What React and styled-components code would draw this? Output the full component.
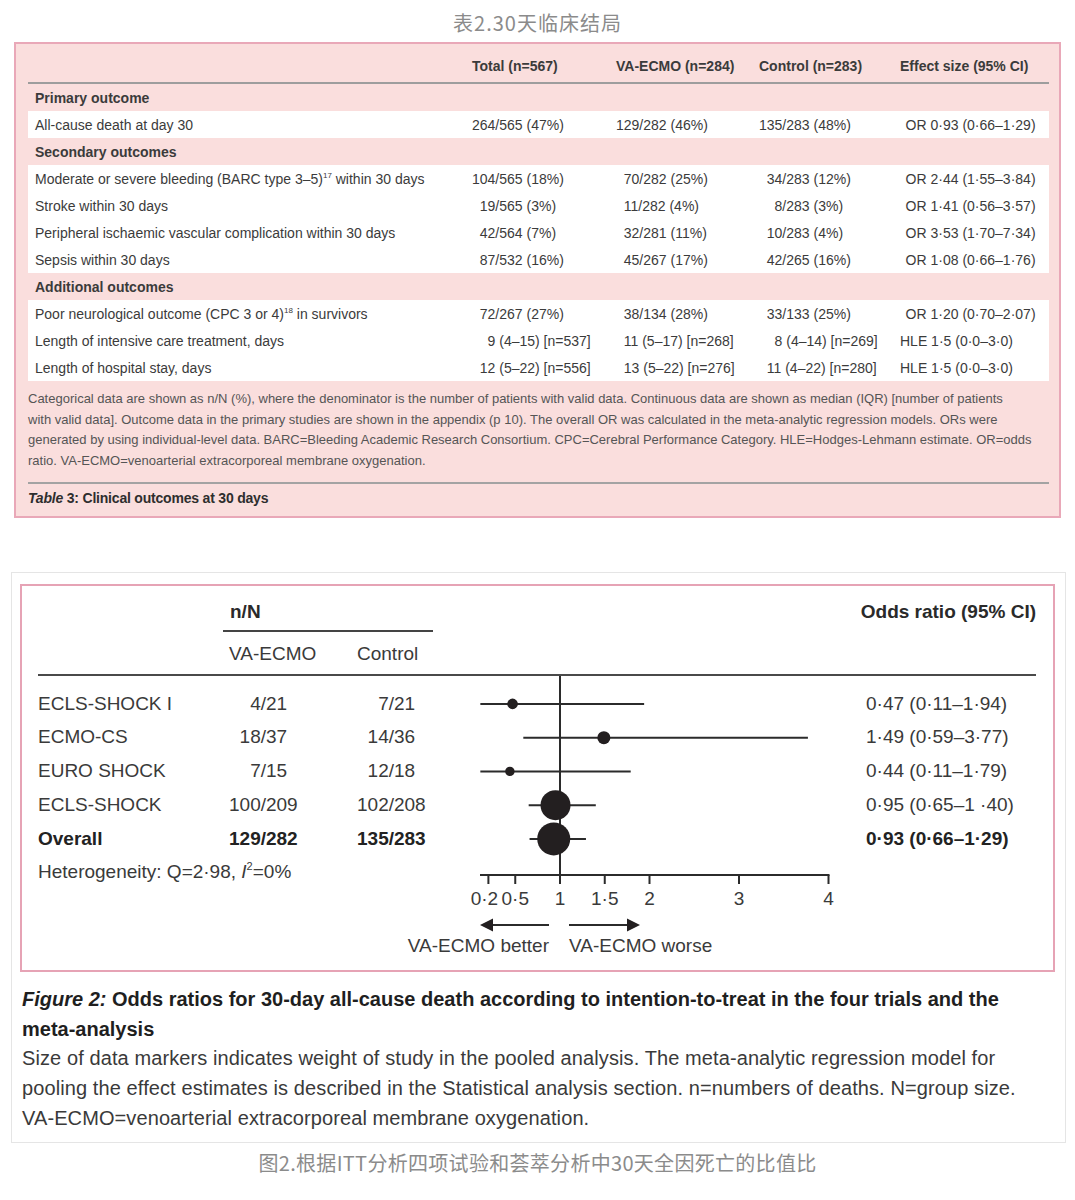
import React from "react";
import styled, { createGlobalStyle } from "styled-components";

const GlobalStyle = createGlobalStyle`
  body {
    margin: 0;
    background: #fff;
    font-family: "Liberation Sans", Arial, sans-serif;
  }
`;

// figure space / thin spaces keep the numbers lined up on the slash
const F = "\u2007";
const T = "\u2009\u2009";

const tableSections = [
  {
    title: "Primary outcome",
    rows: [
      ["All-cause death at day 30", "264/565 (47%)", "129/282 (46%)", "135/283 (48%)", T + "OR 0·93 (0·66–1·29)"],
    ],
  },
  {
    title: "Secondary outcomes",
    rows: [
      [
        <>Moderate or severe bleeding (BARC type 3–5)<sup>17</sup> within 30 days</>,
        "104/565 (18%)", F + "70/282 (25%)", F + "34/283 (12%)", T + "OR 2·44 (1·55–3·84)",
      ],
      ["Stroke within 30 days", F + "19/565 (3%)", F + "11/282 (4%)", F + F + "8/283 (3%)", T + "OR 1·41 (0·56–3·57)"],
      ["Peripheral ischaemic vascular complication within 30 days", F + "42/564 (7%)", F + "32/281 (11%)", F + "10/283 (4%)", T + "OR 3·53 (1·70–7·34)"],
      ["Sepsis within 30 days", F + "87/532 (16%)", F + "45/267 (17%)", F + "42/265 (16%)", T + "OR 1·08 (0·66–1·76)"],
    ],
  },
  {
    title: "Additional outcomes",
    rows: [
      [
        <>Poor neurological outcome (CPC 3 or 4)<sup>18</sup> in survivors</>,
        F + "72/267 (27%)", F + "38/134 (28%)", F + "33/133 (25%)", T + "OR 1·20 (0·70–2·07)",
      ],
      ["Length of intensive care treatment, days", F + F + "9 (4–15) [n=537]", F + "11 (5–17) [n=268]", F + F + "8 (4–14) [n=269]", "HLE 1·5 (0·0–3·0)"],
      ["Length of hospital stay, days", F + "12 (5–22) [n=556]", F + "13 (5–22) [n=276]", F + "11 (4–22) [n=280]", "HLE 1·5 (0·0–3·0)"],
    ],
  },
];

const studies = [
  { name: "ECLS-SHOCK I", va: F + F + "4/21", ctrl: F + F + "7/21", or: "0·47 (0·11–1·94)", est: 0.47, lo: 0.11, hi: 1.94, r: 5.3 },
  { name: "ECMO-CS", va: F + "18/37", ctrl: F + "14/36", or: "1·49 (0·59–3·77)", est: 1.49, lo: 0.59, hi: 3.77, r: 6.5 },
  { name: "EURO SHOCK", va: F + F + "7/15", ctrl: F + "12/18", or: "0·44 (0·11–1·79)", est: 0.44, lo: 0.11, hi: 1.79, r: 4.7 },
  { name: "ECLS-SHOCK", va: "100/209", ctrl: "102/208", or: "0·95 (0·65–1 ·40)", est: 0.95, lo: 0.65, hi: 1.4, r: 15 },
  { name: "Overall", va: "129/282", ctrl: "135/283", or: "0·93 (0·66–1·29)", est: 0.93, lo: 0.66, hi: 1.29, r: 16.5, bold: true },
];

// value, label, nudge of the label so the two small ticks don't collide
const ticks = [
  [0.2, "0·2", -4], [0.5, "0·5", 0], [1, "1", 0], [1.5, "1·5", 0], [2, "2", 0], [3, "3", 0], [4, "4", 0],
];

const ROW_H = 33.75;
const BODY_TOP = 11;
const sx = (v) => 34.5 + 89.5 * v;
const cy = (i) => BODY_TOP + ROW_H * i + ROW_H / 2;

/* ---------- table ---------- */

const Page = styled.div`
  width: 1075px;
  padding-bottom: 20px;
`;

const CnCaption = styled.div`
  box-sizing: border-box;
  height: ${(p) => p.$height}px;
  padding-top: ${(p) => p.$top}px;
  line-height: 26px;
  text-align: center;
  font-family: "Noto Sans CJK SC", "Noto Sans", sans-serif;
  font-size: 20px;
  letter-spacing: ${(p) => p.$spacing}px;
  color: #8b8b8b;
`;

const TableBox = styled.section`
  margin: 0 14px;
  border: 2px solid #e9a8b8;
  background: #fadedd;
  padding: 0 10px 8px 12px;
  color: #3b3b3b;
  font-size: 14px;
`;

const Row = styled.div`
  display: grid;
  grid-template-columns: 444px 144px 143px 141px 1fr;
  align-items: center;
  height: 27px;
  white-space: nowrap;
  background: ${(p) => (p.$white ? "#fff" : "transparent")};

  sup {
    font-size: 8px;
    line-height: 0;
    vertical-align: 6px;
  }
`;

const HeadRow = styled(Row)`
  box-sizing: border-box;
  height: 40px;
  align-items: start;
  padding-top: 12px;
  line-height: 20px;
  font-weight: 700;
  border-bottom: 2px solid #9d9d9d;
`;

const Label = styled.div`
  padding-left: 7px;
  font-weight: ${(p) => (p.$bold ? 700 : 400)};
`;

const Cell = styled.div``;

const Footnote = styled.p`
  margin: 0;
  padding-top: 8px;
  font-size: 13px;
  line-height: 20.7px;
  color: #555;
  white-space: nowrap;
`;

const FootRule = styled.hr`
  margin: 10px 0 0;
  border: 0;
  border-top: 2px solid #a3a3a3;
`;

const TableTitle = styled.div`
  margin-top: 4px;
  line-height: 20px;
  font-weight: 700;
  letter-spacing: -0.2px;
  color: #2e2e2e;
`;

/* ---------- forest plot ---------- */

const FigureBox = styled.section`
  margin: 54px 9px 0 11px;
  border: 1px solid #e5e5e5;
  padding: 11px 10px 8px 8px;
`;

const ForestPanel = styled.div`
  border: 2px solid #e6a3b5;
  padding: 0 17px 0 16px;
  color: #3a3a3a;
  font-size: 19px;
`;

const ForestHead = styled.div`
  display: grid;
  grid-template-columns: 191px 128px 76px 1fr;
  border-bottom: 2px solid #4a4a4a;
  line-height: 24px;
`;

const NGroup = styled.div`
  grid-column: 2 / 4;
  grid-row: 1;
  margin-left: -6px;
  padding: 14px 0 6px 7px;
  border-bottom: 2px solid #444;
  font-weight: 700;
  color: #2a2a2a;
`;

const OddsHead = styled.div`
  grid-column: 4;
  grid-row: 1;
  justify-self: end;
  padding-top: 14px;
  font-weight: 700;
  color: #2a2a2a;
`;

const SubHead = styled.div`
  grid-column: ${(p) => p.$col};
  grid-row: 2;
  padding: 10px 0 8px;
`;

const ForestBody = styled.div`
  display: flex;
  height: 294px;
`;

const StudyGrid = styled.div`
  flex: none;
  width: 398px;
  display: grid;
  grid-template-columns: 191px 128px 79px;
  grid-auto-rows: ${ROW_H}px;
  align-items: center;
  align-content: start;
  padding-top: ${BODY_TOP}px;
  box-sizing: border-box;
  white-space: nowrap;
`;

const StudyCell = styled.div`
  font-weight: ${(p) => (p.$bold ? 700 : 400)};
  color: ${(p) => (p.$bold ? "#222" : "inherit")};
  grid-column: ${(p) => p.$span || "auto"};

  sup {
    font-size: 11px;
    line-height: 0;
    vertical-align: 8px;
  }
`;

const Plot = styled.svg`
  flex: none;
  overflow: visible;

  text {
    font-family: "Liberation Sans", Arial, sans-serif;
    font-size: 19px;
    fill: #3a3a3a;
  }
`;

const OrColumn = styled.div`
  display: grid;
  grid-auto-rows: ${ROW_H}px;
  align-items: center;
  align-content: start;
  padding: ${BODY_TOP}px 0 0 6px;
  white-space: nowrap;
`;

const FigureCaption = styled.p`
  margin: 13px 0 0 2px;
  font-size: 20px;
  line-height: 29.8px;
  letter-spacing: 0.1px;
  color: #3a3a3a;
  white-space: nowrap;

  strong {
    letter-spacing: 0;
    color: #1f1f1f;
  }
`;

function ForestPlot() {
  return (
    <Plot width="424" height="294" viewBox="0 0 424 294">
      <line x1={sx(1)} y1="0" x2={sx(1)} y2="208" stroke="#2b2b2b" strokeWidth="2" />
      <line x1="44" y1="199" x2={sx(4) + 1} y2="199" stroke="#2b2b2b" strokeWidth="2" />
      {ticks.map(([v, label, dx]) => (
        <g key={label}>
          <line x1={sx(v)} y1="199" x2={sx(v)} y2="208" stroke="#2b2b2b" strokeWidth="2" />
          <text x={sx(v) + dx} y="229" textAnchor="middle">{label}</text>
        </g>
      ))}
      {studies.map((s, i) => (
        <g key={s.name}>
          <line x1={sx(s.lo)} y1={cy(i)} x2={sx(s.hi)} y2={cy(i)} stroke="#2b2b2b" strokeWidth="2" />
          <circle cx={sx(s.est)} cy={cy(i)} r={s.r} fill="#231f20" />
        </g>
      ))}
      <line x1="113" y1="249" x2="54" y2="249" stroke="#2b2b2b" strokeWidth="2" />
      <polygon points="44,249 57,242.5 57,255.5" fill="#231f20" />
      <line x1="133" y1="249" x2="194" y2="249" stroke="#2b2b2b" strokeWidth="2" />
      <polygon points="204,249 191,242.5 191,255.5" fill="#231f20" />
      <text x="113" y="275.5" textAnchor="end">VA-ECMO better</text>
      <text x="133" y="275.5">VA-ECMO worse</text>
    </Plot>
  );
}

export default function App() {
  return (
    <Page>
      <GlobalStyle />
      <CnCaption $height={42} $top={10} $spacing={1}>表2.30天临床结局</CnCaption>

      <TableBox>
        <HeadRow>
          <Cell />
          <Cell>Total (n=567)</Cell>
          <Cell>VA-ECMO (n=284)</Cell>
          <Cell>Control (n=283)</Cell>
          <Cell>Effect size (95% CI)</Cell>
        </HeadRow>
        {tableSections.map((section) => (
          <React.Fragment key={section.title}>
            <Row>
              <Label $bold>{section.title}</Label>
            </Row>
            {section.rows.map((row, i) => (
              <Row $white key={i}>
                <Label>{row[0]}</Label>
                <Cell>{row[1]}</Cell>
                <Cell>{row[2]}</Cell>
                <Cell>{row[3]}</Cell>
                <Cell>{row[4]}</Cell>
              </Row>
            ))}
          </React.Fragment>
        ))}
        <Footnote>
          Categorical data are shown as n/N (%), where the denominator is the number of patients with valid data. Continuous data are shown as median (IQR) [number of patients
          <br />
          with valid data]. Outcome data in the primary studies are shown in the appendix (p 10). The overall OR was calculated in the meta-analytic regression models. ORs were
          <br />
          generated by using individual-level data. BARC=Bleeding Academic Research Consortium. CPC=Cerebral Performance Category. HLE=Hodges-Lehmann estimate. OR=odds
          <br />
          ratio. VA-ECMO=venoarterial extracorporeal membrane oxygenation.
        </Footnote>
        <FootRule />
        <TableTitle>
          <em>Table</em> 3: Clinical outcomes at 30 days
        </TableTitle>
      </TableBox>

      <FigureBox>
        <ForestPanel>
          <ForestHead>
            <NGroup>n/N</NGroup>
            <OddsHead>Odds ratio (95% CI)</OddsHead>
            <SubHead $col={2}>VA-ECMO</SubHead>
            <SubHead $col={3}>Control</SubHead>
          </ForestHead>
          <ForestBody>
            <StudyGrid>
              {studies.map((s) => (
                <React.Fragment key={s.name}>
                  <StudyCell $bold={s.bold}>{s.name}</StudyCell>
                  <StudyCell $bold={s.bold}>{s.va}</StudyCell>
                  <StudyCell $bold={s.bold}>{s.ctrl}</StudyCell>
                </React.Fragment>
              ))}
              <StudyCell $span="1 / 4">
                Heterogeneity: Q=2·98, <i>I</i><sup>2</sup>=0%
              </StudyCell>
            </StudyGrid>
            <ForestPlot />
            <OrColumn>
              {studies.map((s) => (
                <StudyCell key={s.name} $bold={s.bold}>{s.or}</StudyCell>
              ))}
            </OrColumn>
          </ForestBody>
        </ForestPanel>
        <FigureCaption>
          <strong>
            <em>Figure 2:</em> Odds ratios for 30-day all-cause death according to intention-to-treat in the four trials and the
            <br />
            meta-analysis
          </strong>
          <br />
          Size of data markers indicates weight of study in the pooled analysis. The meta-analytic regression model for
          <br />
          pooling the effect estimates is described in the Statistical analysis section. n=numbers of deaths. N=group size.
          <br />
          VA-ECMO=venoarterial extracorporeal membrane oxygenation.
        </FigureCaption>
      </FigureBox>

      <CnCaption $height={33} $top={7} $spacing={0.3}>图2.根据ITT分析四项试验和荟萃分析中30天全因死亡的比值比</CnCaption>
    </Page>
  );
}
